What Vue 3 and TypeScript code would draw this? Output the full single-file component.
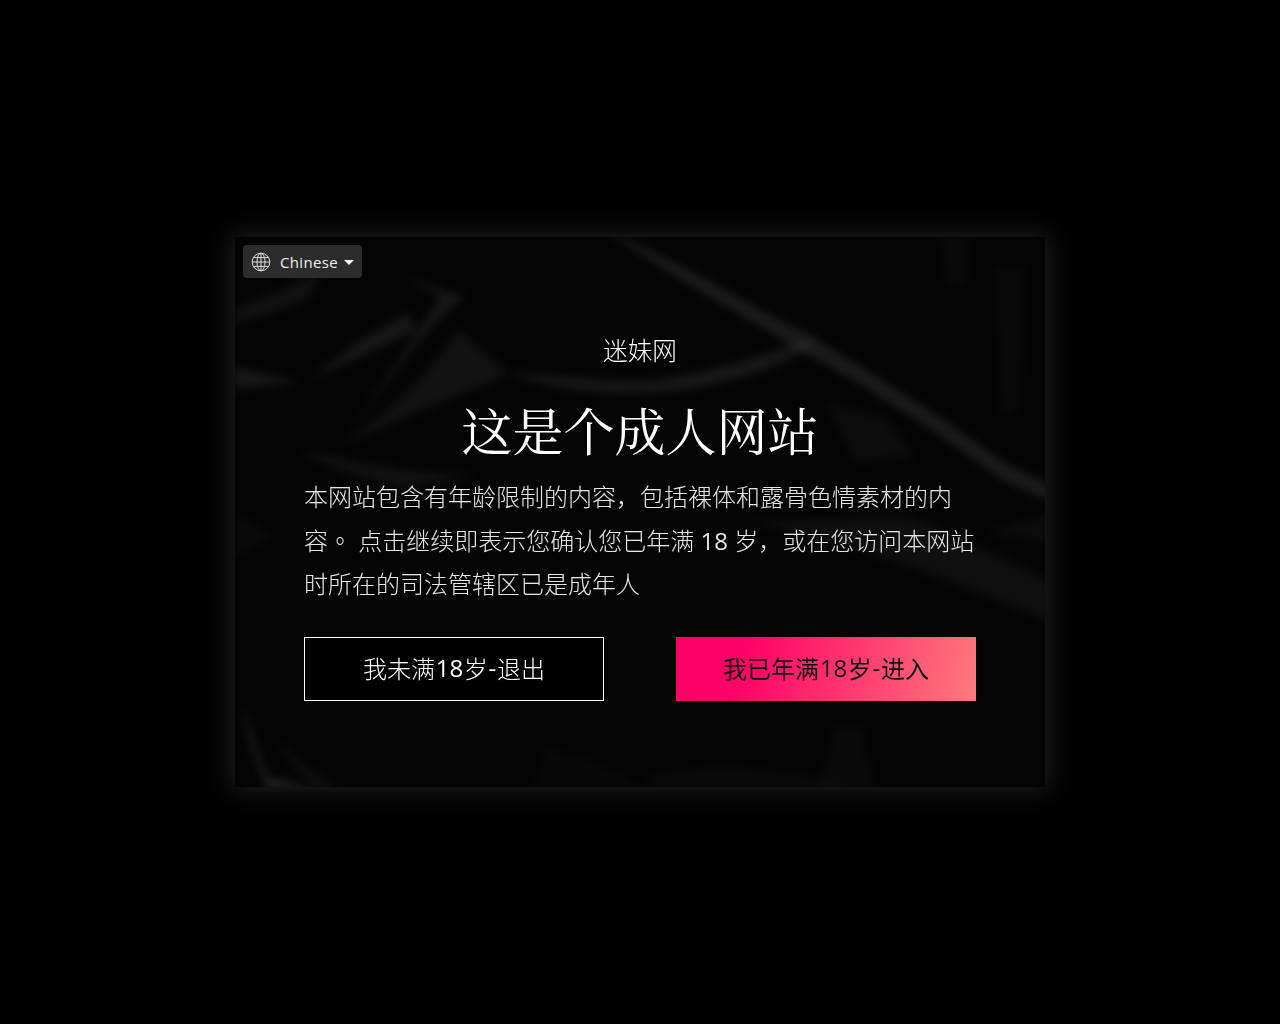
<script setup lang="ts">
interface Fold { d: string; o: number }
const folds: Fold[] = [
  { d: 'M0 72 C30 60 55 50 85 35 L75 60 C50 72 25 80 0 86 Z', o: 0.05 },
  { d: 'M78 140 C110 112 140 92 175 76 L180 94 C145 110 110 128 78 140 Z', o: 0.07 },
  { d: 'M105 210 C140 160 175 115 203 83 L230 60 L170 40 L205 60 L188 85 C160 130 130 170 105 210 Z', o: 0.07 },
  { d: 'M107 207 L195 170 L273 137 L232 100 L224 92 C200 130 150 180 107 207 Z', o: 0.055 },
  { d: 'M0 130 L66 145 L0 152 Z', o: 0.07 },
  { d: 'M273 135 C320 138 370 144 405 144 C460 140 510 123 580 102 C565 125 500 147 440 154 C390 160 320 156 273 135 Z', o: 0.07 },
  { d: 'M65 213 C120 225 180 238 245 238 L170 250 C130 242 95 232 65 213 Z', o: 0.05 },
  { d: 'M375 -4 C440 20 510 68 575 98 C640 138 720 188 765 223 L814 248 L814 264 L765 242 C700 192 620 142 558 110 C500 72 430 37 375 -4 Z', o: 0.085 },
  { d: 'M760 30 L790 30 L785 170 L765 180 Z', o: 0.018 },
  { d: 'M705 0 L735 0 L730 50 L710 45 Z', o: 0.018 },
  { d: 'M590 165 L650 180 L680 220 L620 225 Z', o: 0.03 },
  { d: 'M505 282 C600 290 640 270 690 285 C740 310 780 325 814 345 L814 385 C760 360 710 345 680 330 C640 320 590 300 505 282 Z', o: 0.045 },
  { d: 'M750 295 L814 278 L814 305 Z', o: 0.03 },
  { d: 'M8 468 C18 500 25 525 33 540 L82 552 L34 552 C22 530 12 500 8 468 Z', o: 0.11 },
  { d: 'M36 500 L80 552 L100 552 Z', o: 0.04 },
  { d: 'M0 275 L40 300 L0 320 Z', o: 0.02 },
  { d: 'M600 490 L625 490 L640 552 L585 552 Z', o: 0.025 },
  { d: 'M415 540 C470 525 550 530 620 552 L415 552 Z', o: 0.025 },
  { d: 'M310 510 L360 525 L410 552 L300 552 Z', o: 0.015 },
]
</script>

<template>
  <main class="page">
    <section class="card">
      <svg class="silk" viewBox="0 0 810 550" preserveAspectRatio="none" aria-hidden="true">
        <defs>
          <filter id="soft" x="-20%" y="-20%" width="140%" height="140%">
            <feGaussianBlur stdDeviation="4" />
          </filter>
        </defs>
        <g filter="url(#soft)" fill="#fff">
          <path v-for="(f, i) in folds" :key="i" :d="f.d" :fill-opacity="f.o" />
        </g>
      </svg>

      <button class="lang" type="button">
        <svg class="globe" viewBox="0 0 20 20" fill="none" stroke="currentColor" stroke-width="1">
          <circle cx="10" cy="10" r="8.8" />
          <ellipse cx="10" cy="10" rx="4" ry="8.8" />
          <path d="M10 1.2v17.6M1.2 10h17.6M2.4 5.6h15.2M2.4 14.4h15.2" />
        </svg>
        <span class="lang-label">Chinese</span>
        <span class="caret"></span>
      </button>

      <div class="body">
        <p class="site">迷妹网</p>
        <h1 class="title">这是个成人网站</h1>
        <p class="desc">
          <span class="line">本网站包含有年龄限制的内容，包括裸体和露骨色情素材的内</span>
          <span class="line">容<span class="stop">。</span> 点击继续即表示您确认您已年满 <span class="age">18</span> 岁，或在您访问本网站</span>
          <span class="line">时所在的司法管辖区已是成年人</span>
        </p>
        <div class="actions">
          <a class="btn btn-exit">我未满<span class="num">18</span>岁<span class="num">-</span>退出</a>
          <a class="btn btn-enter">我已年满<span class="num">18</span>岁<span class="num">-</span>进入</a>
        </div>
      </div>
    </section>
  </main>
</template>

<style>
html, body { margin: 0; background: #000; }
</style>

<style scoped>
.page {
  height: 1024px;
  background: #000;
  display: flex;
  align-items: flex-start;
  justify-content: center;
  padding-top: 237px;
  box-sizing: border-box;
  font-family: "Open Sans", "Noto Sans CJK SC", sans-serif;
}
.card {
  position: relative;
  width: 810px;
  height: 550px;
  box-sizing: border-box;
  background: #040404;
  box-shadow: 0 0 22px 5px rgba(255, 255, 255, 0.11);
  overflow: hidden;
}
.silk { position: absolute; inset: 0; width: 100%; height: 100%; }
.lang {
  position: absolute;
  left: 8px;
  top: 8px;
  width: 119px;
  height: 33px;
  display: flex;
  align-items: center;
  padding: 0 0 0 8px;
  box-sizing: border-box;
  border: 0;
  border-radius: 4px;
  background: #2c2c2c;
  color: #eee;
  font: inherit;
  font-size: 15px;
  letter-spacing: 0.35px;
}
.globe { width: 20px; height: 20px; flex: none; color: #ddd; }
.lang-label { margin-left: 9px; }
.caret {
  margin-left: 6px;
  margin-top: 1px;
  border-left: 5px solid transparent;
  border-right: 5px solid transparent;
  border-top: 5px solid #eee;
}
.body {
  position: relative;
  padding: 94px 69px 0;
  display: flex;
  flex-direction: column;
  will-change: transform;
}
.site {
  margin: 0;
  text-align: center;
  color: #fff;
  font-size: 24.6px;
  font-weight: 300;
  line-height: 40px;
}
.title {
  margin: 25px 0 0;
  text-align: center;
  color: #fff;
  font-family: "Noto Serif CJK SC", "Liberation Serif", serif;
  font-weight: 400;
  font-size: 51px;
  line-height: 66px;
}
.desc {
  margin: 13px 0 0;
  color: #e6e6e6;
  font-size: 24px;
  font-weight: 300;
  line-height: 43.5px;
  width: 672px;
}
.line { display: block; white-space: nowrap; }
.stop { font-family: "Noto Sans CJK TC", sans-serif; line-height: 1; }
.age { font-weight: 400; }
.actions {
  display: flex;
  justify-content: space-between;
  margin-top: 31px;
}
.btn {
  width: 300px;
  height: 64px;
  box-sizing: border-box;
  display: flex;
  align-items: center;
  justify-content: center;
  padding-bottom: 2px;
  font-size: 24px;
  font-weight: 300;
}
.num { font-weight: 500; margin: 0 0.7px; }
.btn-exit { border: 1px solid #fff; color: #fff; background: #000; }
.btn-enter {
  color: #111;
  font-weight: 400;
  background: linear-gradient(105deg, #ff0066 22%, #ff7a7c 100%);
}
</style>
